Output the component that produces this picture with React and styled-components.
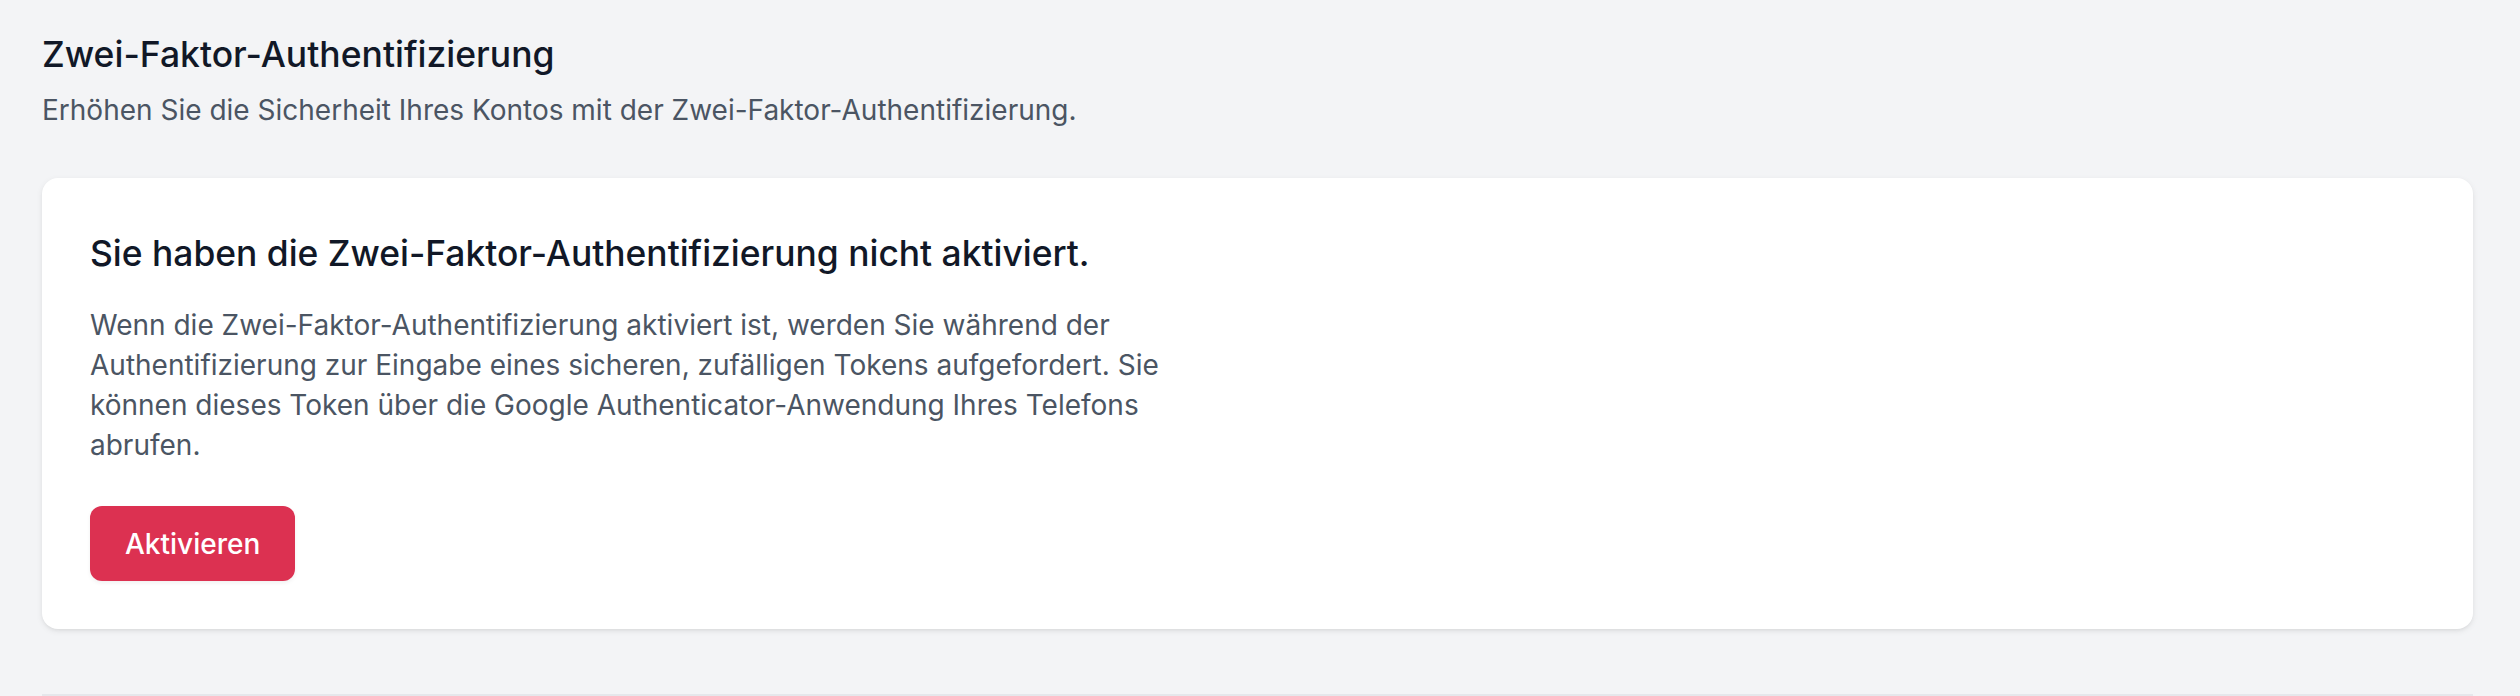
import React from 'react';
import styled, { createGlobalStyle } from 'styled-components';

const GlobalStyle = createGlobalStyle`
  html, body {
    margin: 0;
    padding: 0;
    background: #f3f4f6;
  }
  body {
    font-family: Inter, 'Noto Sans', 'Liberation Sans', sans-serif;
    -webkit-font-smoothing: antialiased;
  }
`;

const App = () => (
  <>
    <GlobalStyle />
    <Page>
      <Header>
        <Title>Zwei-Faktor-Authentifizierung</Title>
        <Subtitle>
          Erhöhen Sie die Sicherheit Ihres Kontos mit der Zwei-Faktor-Authentifizierung.
        </Subtitle>
      </Header>

      <Card>
        <CardTitle>Sie haben die Zwei-Faktor-Authentifizierung nicht aktiviert.</CardTitle>
        <CardText>
          Wenn die Zwei-Faktor-Authentifizierung aktiviert ist, werden Sie während der
          Authentifizierung zur Eingabe eines sicheren, zufälligen Tokens aufgefordert. Sie
          können dieses Token über die Google Authenticator-Anwendung Ihres Telefons
          abrufen.
        </CardText>
        <Actions>
          <PrimaryButton type="button">Aktivieren</PrimaryButton>
        </Actions>
      </Card>

      <Divider />
    </Page>
  </>
);

export default App;

const Page = styled.div`
  display: flex;
  flex-direction: column;
  padding: 31px 47px 0 42px;
  min-height: 696px;
  box-sizing: border-box;
`;

const Header = styled.div`
  display: flex;
  flex-direction: column;
  gap: 11px;
`;

const Title = styled.h2`
  margin: 0;
  font-size: 35.5px;
  line-height: 48px;
  font-weight: 500;
  color: #111827;
`;

const Subtitle = styled.p`
  margin: 0;
  font-size: 28px;
  line-height: 40px;
  color: #4b5563;
`;

const Card = styled.section`
  margin-top: 48px;
  padding: 48px;
  background: #fff;
  border-radius: 16px;
  box-shadow: 0 2px 6px 0 rgba(0, 0, 0, 0.08), 0 2px 4px -2px rgba(0, 0, 0, 0.08);
`;

const CardTitle = styled.h3`
  margin: 0;
  font-size: 35.4px;
  line-height: 56px;
  font-weight: 500;
  color: #111827;
`;

const CardText = styled.p`
  margin: 23px 0 0;
  max-width: 1090px;
  font-size: 28px;
  line-height: 40px;
  color: #4b5563;
`;

const Actions = styled.div`
  display: flex;
  margin-top: 41px;
`;

const PrimaryButton = styled.button`
  display: inline-flex;
  align-items: center;
  justify-content: center;
  height: 75px;
  padding: 0 35px;
  border: none;
  border-radius: 12px;
  background: #dc3151;
  color: #fff;
  font-family: inherit;
  font-size: 28px;
  font-weight: 500;
  box-shadow: 0 2px 4px rgba(0, 0, 0, 0.06);
  cursor: pointer;
`;

const Divider = styled.div`
  margin-top: 65px;
  border-top: 2px solid #e5e7eb;
  flex: 1;
`;
